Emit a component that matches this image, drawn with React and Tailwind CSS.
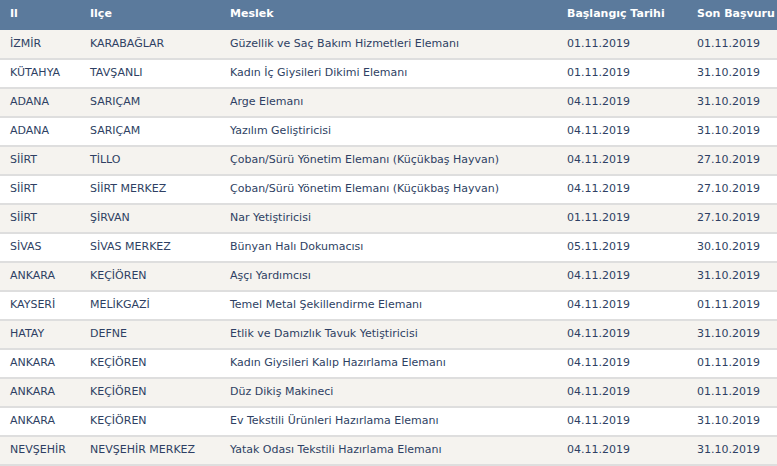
import React from 'react';

const rows = [
  ['İZMİR', 'KARABAĞLAR', 'Güzellik ve Saç Bakım Hizmetleri Elemanı', '01.11.2019', '01.11.2019'],
  ['KÜTAHYA', 'TAVŞANLI', 'Kadın İç Giysileri Dikimi Elemanı', '01.11.2019', '31.10.2019'],
  ['ADANA', 'SARIÇAM', 'Arge Elemanı', '04.11.2019', '31.10.2019'],
  ['ADANA', 'SARIÇAM', 'Yazılım Geliştiricisi', '04.11.2019', '31.10.2019'],
  ['SİİRT', 'TİLLO', 'Çoban/Sürü Yönetim Elemanı (Küçükbaş Hayvan)', '04.11.2019', '27.10.2019'],
  ['SİİRT', 'SİİRT MERKEZ', 'Çoban/Sürü Yönetim Elemanı (Küçükbaş Hayvan)', '04.11.2019', '27.10.2019'],
  ['SİİRT', 'ŞİRVAN', 'Nar Yetiştiricisi', '01.11.2019', '27.10.2019'],
  ['SİVAS', 'SİVAS MERKEZ', 'Bünyan Halı Dokumacısı', '05.11.2019', '30.10.2019'],
  ['ANKARA', 'KEÇİÖREN', 'Aşçı Yardımcısı', '04.11.2019', '31.10.2019'],
  ['KAYSERİ', 'MELİKGAZİ', 'Temel Metal Şekillendirme Elemanı', '04.11.2019', '01.11.2019'],
  ['HATAY', 'DEFNE', 'Etlik ve Damızlık Tavuk Yetiştiricisi', '04.11.2019', '31.10.2019'],
  ['ANKARA', 'KEÇİÖREN', 'Kadın Giysileri Kalıp Hazırlama Elemanı', '04.11.2019', '01.11.2019'],
  ['ANKARA', 'KEÇİÖREN', 'Düz Dikiş Makineci', '04.11.2019', '01.11.2019'],
  ['ANKARA', 'KEÇİÖREN', 'Ev Tekstili Ürünleri Hazırlama Elemanı', '04.11.2019', '31.10.2019'],
  ['NEVŞEHİR', 'NEVŞEHİR MERKEZ', 'Yatak Odası Tekstili Hazırlama Elemanı', '04.11.2019', '31.10.2019'],
];

const headers = ['Il', 'Ilçe', 'Meslek', 'Başlangıç Tarihi', 'Son Başvuru'];

export default function App() {
  return (
    <div className="w-[777px] h-[466px] overflow-hidden bg-white font-['DejaVu_Sans',Verdana,sans-serif] text-[11px]">
      <table className="table-fixed w-[820px] border-collapse">
        <colgroup>
          <col className="w-[80px]" />
          <col className="w-[140px]" />
          <col className="w-[337px]" />
          <col className="w-[130px]" />
          <col className="w-[133px]" />
        </colgroup>
        <thead>
          <tr className="bg-[#5b7a9c] text-white h-[30px]">
            {headers.map((h) => (
              <th key={h} className="text-left font-bold pl-[10px] pb-px whitespace-nowrap">{h}</th>
            ))}
          </tr>
        </thead>
        <tbody>
          {rows.map((r, i) => (
            <tr
              key={i}
              className={`h-[29px] border-b-2 border-[#dedede] text-[#2e3f63] ${i % 2 === 0 ? 'bg-[#f5f3ef]' : 'bg-white'}`}
            >
              {r.map((c, j) => (
                <td key={j} className="pl-[10px] whitespace-nowrap">{c}</td>
              ))}
            </tr>
          ))}
        </tbody>
      </table>
    </div>
  );
}
